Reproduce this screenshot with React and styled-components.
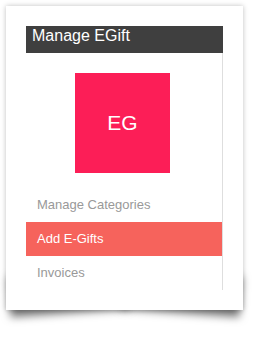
import styled, { createGlobalStyle } from 'styled-components';

const GlobalStyle = createGlobalStyle`
    body {
        margin: 0;
        background: #fff;
        font-family: "Liberation Sans", Arial, sans-serif;
    }
`;

// bottom padding keeps the drop shadow inside the document
const Page = styled.div`
    padding: 6px 0 30px 6px;
`;

// wrapper that owns the curved drop shadow under the card
const Frame = styled.div`
    position: relative;
    isolation: isolate;
    width: 237px;

    &::before,
    &::after {
        content: '';
        position: absolute;
        z-index: -1;
        bottom: 14px;
        width: 50%;
        height: 40px;
        box-shadow: 0 17px 9px rgba(0, 0, 0, 0.55);
    }
    &::before {
        left: 2px;
        transform: rotate(-4deg);
    }
    &::after {
        right: 2px;
        transform: rotate(4deg);
    }
`;

const Card = styled.div`
    position: relative;
    z-index: 0;
    height: 304px;
    box-sizing: border-box;
    padding: 20px;
    background: #fff;
    box-shadow: 0 0 5px rgba(0, 0, 0, 0.25);
`;

const Sidebar = styled.div`
    width: 197px;
    height: 264px;
    display: flex;
    flex-direction: column;
`;

const Header = styled.div`
    height: 27px;
    flex: 0 0 auto;
    background: #3f3f3f;
    color: #fff;
    font-size: 16px;
    line-height: 20px;
    padding: 0 6px;
`;

const Body = styled.div`
    flex: 1 1 auto;
    border-right: 1px solid #dedede;
`;

const Logo = styled.div`
    width: 95px;
    height: 100px;
    margin: 20px 0 15px 49px;
    background: #fc1e57;
    color: #fff;
    font-size: 21px;
    display: flex;
    align-items: center;
    justify-content: center;
`;

const Item = styled.div`
    height: 34px;
    line-height: 34px;
    padding-left: 11px;
    font-size: 13px;
    color: ${p => (p.$active ? '#fff' : '#999')};
    background: ${p => (p.$active ? '#f6635c' : 'transparent')};
`;

const kItems = ['Manage Categories', 'Add E-Gifts', 'Invoices'];

export default function App() {
    return (
        <Page>
            <GlobalStyle />
            <Frame>
                <Card>
                    <Sidebar>
                        <Header>Manage EGift</Header>
                        <Body>
                            <Logo>EG</Logo>
                            {kItems.map((name, idx) => (
                                <Item key={idx} $active={idx === 1}>{name}</Item>
                            ))}
                        </Body>
                    </Sidebar>
                </Card>
            </Frame>
        </Page>
    );
}
